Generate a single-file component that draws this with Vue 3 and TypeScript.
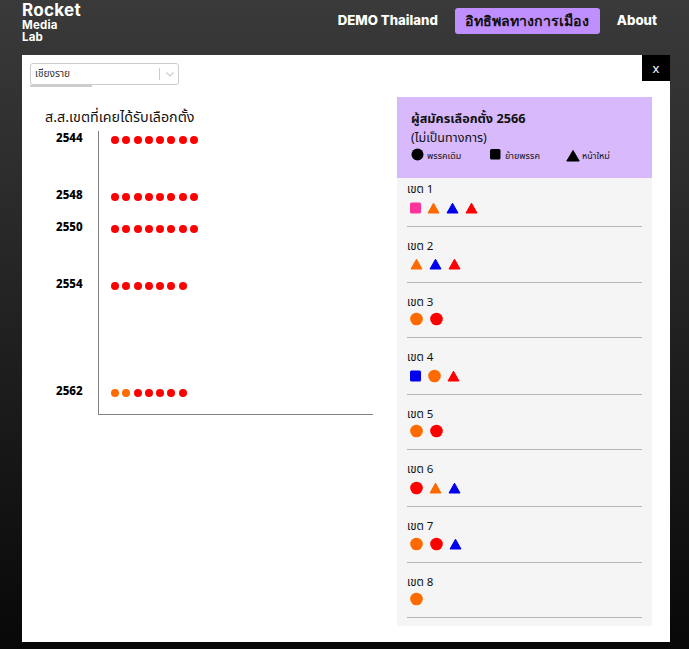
<script setup lang="ts">
type Shape = 'c' | 's' | 't'
interface Mark { shape: Shape; color: string }
const R = '#ff0000', O = '#ff6a00', B = '#0000ee', P = '#ff3399'
const m = (shape: Shape, color: string): Mark => ({ shape, color })

const years = [
  { year: 2544, top: 0, dots: Array(8).fill(R) },
  { year: 2548, top: 57, dots: Array(8).fill(R) },
  { year: 2550, top: 89, dots: Array(8).fill(R) },
  { year: 2554, top: 146, dots: Array(7).fill(R) },
  { year: 2562, top: 253, dots: [O, O, R, R, R, R, R] },
]
const districts = [
  { name: 'เขต 1', h: 49, gap: 3, marks: [m('s', P), m('t', O), m('t', B), m('t', R)] },
  { name: 'เขต 2', h: 56, gap: 2, marks: [m('t', O), m('t', B), m('t', R)] },
  { name: 'เขต 3', h: 55, gap: 1, marks: [m('c', O), m('c', R)] },
  { name: 'เขต 4', h: 57, gap: 3, marks: [m('s', B), m('c', O), m('t', R)] },
  { name: 'เขต 5', h: 55, gap: 1, marks: [m('c', O), m('c', R)] },
  { name: 'เขต 6', h: 57, gap: 3, marks: [m('c', R), m('t', O), m('t', B)] },
  { name: 'เขต 7', h: 56, gap: 2, marks: [m('c', O), m('c', R), m('t', B)] },
  { name: 'เขต 8', h: 55, gap: 1, marks: [m('c', O)] },
]
const legend = [
  { shape: 'c' as Shape, label: 'พรรคเดิม' },
  { shape: 's' as Shape, label: 'ย้ายพรรค' },
  { shape: 't' as Shape, label: 'หน้าใหม่' },
]
const widths: Record<Shape, number> = { c: 13, s: 11, t: 13 }
</script>

<template>
  <div class="page">
    <header class="nav">
      <div class="logo">
        <div class="logo-big">Rocket</div>
        <div class="logo-small">Media</div>
        <div class="logo-small">Lab</div>
      </div>
      <nav class="links">
        <a class="link">DEMO Thailand</a>
        <a class="link active">อิทธิพลทางการเมือง</a>
        <a class="link">About</a>
      </nav>
    </header>

    <main class="modal">
      <button class="close">x</button>
      <div class="left">
        <div class="select">
          <span class="select-value">เชียงราย</span>
          <span class="select-sep"></span>
          <svg class="chev" width="10" height="10" viewBox="0 0 10 10"><path d="M1.5 3.5 5 7l3.5-3.5" fill="none" stroke="#ccc" stroke-width="1.2" /></svg>
        </div>
        <div class="select-bar"></div>
        <h2 class="chart-title">ส.ส.เขตที่เคยได้รับเลือกตั้ง</h2>
        <div class="chart">
          <div class="axis">
            <div v-for="y in years" :key="y.year" class="year-row" :style="{ top: y.top + 'px' }">
              <span class="year">{{ y.year }}</span>
              <span class="dots">
                <i v-for="(c, i) in y.dots" :key="i" class="dot" :style="{ background: c }"></i>
              </span>
            </div>
          </div>
        </div>
      </div>

      <aside class="panel">
        <div class="panel-head">
          <div class="head-title">ผู้สมัครเลือกตั้ง 2566</div>
          <div class="head-sub">(ไม่เป็นทางการ)</div>
          <div class="legend">
            <span v-for="l in legend" :key="l.label" class="legend-item" :class="'legend-' + l.shape">
              <svg width="14" height="14" viewBox="0 0 14 14">
                <circle v-if="l.shape === 'c'" cx="6.5" cy="6.5" r="6" fill="#000" />
                <rect v-else-if="l.shape === 's'" x="1" y="1" width="10.5" height="10.5" rx="1.5" fill="#000" />
                <path v-else d="M7 1.5 13.2 12H.8Z" fill="#000" stroke="#000" stroke-linejoin="round" />
              </svg>
              <span class="legend-label">{{ l.label }}</span>
            </span>
          </div>
        </div>
        <div class="rows">
          <div v-for="d in districts" :key="d.name" class="row" :style="{ height: d.h + 'px' }">
            <div class="row-name">{{ d.name }}</div>
            <div class="marks" :style="{ marginTop: d.gap + 'px' }">
              <svg v-for="(k, i) in d.marks" :key="i" :width="widths[k.shape]" height="14" :viewBox="`0 0 ${widths[k.shape]} 14`" class="mark" :class="'mark-' + k.shape">
                <circle v-if="k.shape === 'c'" cx="6.5" cy="7" r="6.3" :fill="k.color" />
                <rect v-else-if="k.shape === 's'" x="0" y="1.5" width="11" height="11" rx="1.5" :fill="k.color" />
                <path v-else d="M6.5 2.2 12 12H1Z" :fill="k.color" :stroke="k.color" stroke-linejoin="round" />
              </svg>
            </div>
          </div>
        </div>
      </aside>
    </main>
  </div>
</template>

<style>
html, body { margin: 0; background: #000; }
</style>

<style scoped>
.page {
  width: 689px;
  height: 649px;
  overflow: hidden;
  background: linear-gradient(#3a3a3a, #080808);
  font-family: "Noto Sans", "Noto Sans Thai", "Liberation Sans", sans-serif;
  box-sizing: border-box;
  padding: 0 19px 7px 22px;
  display: flex;
  flex-direction: column;
}
.nav {
  height: 55px;
  display: flex;
  justify-content: space-between;
  color: #fff;
  flex: none;
}
.logo { padding-top: 1px; font-family: "Inter", "Noto Sans", sans-serif; font-weight: 700; }
.logo-big { font-size: 17px; line-height: 18px; letter-spacing: 0.3px; }
.logo-small { font-size: 11.5px; line-height: 12px; letter-spacing: 0.2px; }
.links { display: flex; align-items: flex-start; padding-top: 8px; margin-right: 13px; }
.link {
  height: 26px;
  line-height: 25px;
  font-family: "Inter", "Noto Sans", sans-serif;
  font-size: 13.2px;
  font-weight: 800;
  color: #fff;
}
.link:first-child { margin-right: 17px; }
.link:last-child { margin-left: 17px; }
.active {
  width: 145px;
  text-align: center;
  background: #c08fff;
  color: #111;
  border-radius: 3px;
  font-size: 14.2px;
}
.modal {
  position: relative;
  flex: 1;
  background: #fff;
  display: flex;
  padding: 8px 18px 16px 8px;
}
.close {
  position: absolute;
  top: 0;
  right: 0;
  width: 28px;
  height: 26px;
  border: 0;
  padding: 0;
  background: #000;
  color: #fff;
  font: 13px "Noto Sans", sans-serif;
}
.left { width: 367px; flex: none; }
.select {
  width: 149px;
  height: 22px;
  box-sizing: border-box;
  border: 1px solid #ccc;
  border-radius: 3px;
  display: flex;
  align-items: center;
  font-size: 10.2px;
  color: #333;
}
.select-value { flex: 1; padding-left: 4px; }
.select-sep { width: 1px; height: 12px; background: #ccc; }
.chev { margin: 0 3px 0 5px; }
.select-bar { width: 62px; height: 2px; background: #ccc; }
.chart-title {
  margin: 20px 0 0 15px;
  height: 24px;
  font-size: 14.3px;
  line-height: 20px;
  font-weight: 400;
  color: #111;
}
.chart { margin: 0 0 0 68px; }
.axis {
  position: relative;
  width: 275px;
  height: 284px;
  box-sizing: border-box;
  border-left: 1px solid #808080;
  border-bottom: 1px solid #808080;
}
.year-row { position: absolute; left: 0; display: flex; align-items: center; height: 18px; }
.year {
  position: absolute;
  left: -43px;
  top: -2px;
  font-size: 11.5px;
  font-weight: 800;
  line-height: 18px;
  color: #000;
}
.dots { display: flex; gap: 3.3px; margin-left: 12px; }
.dot { width: 8px; height: 8px; border-radius: 50%; display: block; }
.panel { width: 255px; flex: none; margin-top: 34px; height: 529px; background: #f5f5f5; }
.panel-head {
  height: 81px;
  box-sizing: border-box;
  background: #d8b9fb;
  padding: 12px 0 0 14px;
  color: #111;
}
.head-title { font-size: 12.7px; font-weight: 700; line-height: 18px; }
.head-sub { font-size: 12.5px; line-height: 18px; margin-top: 2px; }
.legend { display: flex; font-size: 9px; }
.legend-item { display: flex; align-items: center; }
.legend-c { width: 78px; }
.legend-s { width: 77px; }
.legend-s svg { margin-top: -1px; }
.legend-t svg { margin-top: 1px; }
.legend-label { margin-left: 2px; margin-top: 2px; }
.rows { padding: 0 10px; }
.row {
  box-sizing: border-box;
  padding-top: 10px;
  border-bottom: 1px solid #b5b5b5;
}
.row:first-child { padding-top: 2px; }
.row-name { font-size: 11.5px; line-height: 18px; color: #111; }
.marks { display: flex; gap: 6px; padding-left: 3px; }
.mark { display: block; }
.mark-c:not(:first-child) { margin-left: 1px; }
</style>
